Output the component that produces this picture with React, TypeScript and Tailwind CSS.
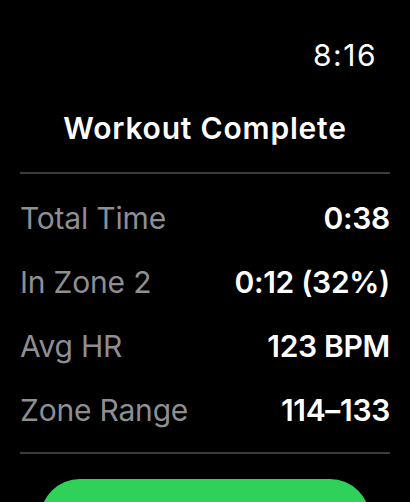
import React from 'react';

const stats = [
  { label: 'Total Time', value: '0:38' },
  { label: 'In Zone 2', value: '0:12 (32%)' },
  { label: 'Avg HR', value: '123 BPM' },
  { label: 'Zone Range', value: '114–133' },
];

export default function App() {
  return (
    <div className="w-[410px] h-[502px] overflow-hidden bg-black text-white font-['Inter','Liberation_Sans',sans-serif]">
      {/* Clock */}
      <div className="pt-[37px] pr-[33px] flex justify-end">
        <span className="text-[30px] leading-[36px] font-normal tracking-[1.5px]">8:16</span>
      </div>

      {/* Title */}
      <h1 className="mt-[37px] text-center text-[30px] leading-[36px] font-semibold tracking-[0.8px]">Workout Complete</h1>

      <div className="mx-[20px] mt-[26px] h-[2px] bg-[#3a3a3c]" />

      {/* Stats */}
      <div className="mt-[12px] px-[20px] flex flex-col">
        {stats.map((s) => (
          <div key={s.label} className="h-[64px] flex items-center justify-between">
            <span className="text-[30px] leading-[36px] text-[#8e8e93] tracking-[-0.2px]">{s.label}</span>
            <span className="text-[30px] leading-[36px] font-semibold text-white tracking-[-0.3px]">{s.value}</span>
          </div>
        ))}
      </div>

      <div className="mx-[20px] mt-[10px] h-[2px] bg-[#3a3a3c]" />

      {/* Done button (cut off) */}
      <div className="mx-[40px] mt-[25px] h-[80px] rounded-[40px] bg-[#30d158]" />
    </div>
  );
}
